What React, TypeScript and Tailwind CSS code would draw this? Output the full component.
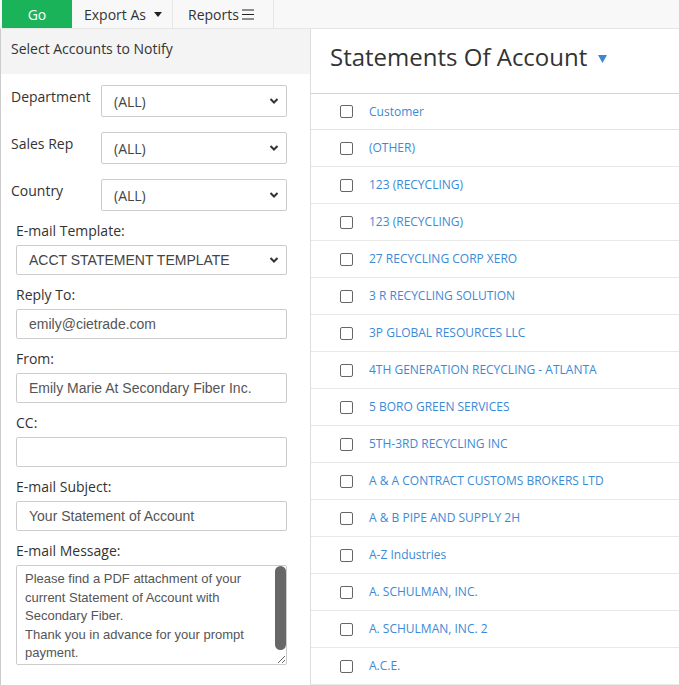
import React from 'react';

const customers = [
  '(OTHER)',
  '123 (RECYCLING)',
  '123 (RECYCLING)',
  '27 RECYCLING CORP XERO',
  '3 R RECYCLING SOLUTION',
  '3P GLOBAL RESOURCES LLC',
  '4TH GENERATION RECYCLING - ATLANTA',
  '5 BORO GREEN SERVICES',
  '5TH-3RD RECYCLING INC',
  'A & A CONTRACT CUSTOMS BROKERS LTD',
  'A & B PIPE AND SUPPLY 2H',
  'A-Z Industries',
  'A. SCHULMAN, INC.',
  'A. SCHULMAN, INC. 2',
  'A.C.E.',
];

const Chevron = () => (
  <svg className="pointer-events-none absolute right-[8px] top-1/2 -translate-y-1/2" width="10" height="7" viewBox="0 0 10 7">
    <path d="M1.5 1.5 L5 5 L8.5 1.5" fill="none" stroke="#333" strokeWidth="2" />
  </svg>
);

const FilterRow = ({ label }: { label: string }) => (
  <div className="flex items-start pl-[10px] pr-[23px]">
    <div className="w-[90px] pt-[2px] text-[14px] leading-[20px] text-[#333]">{label}</div>
    <div className="relative flex-1">
      <select className="h-[32px] w-full appearance-none rounded-[2px] border border-[#ccc] bg-white pl-[12px] text-[14px] text-[#444] outline-none">
        <option>(ALL)</option>
      </select>
      <Chevron />
    </div>
  </div>
);

const Field = ({ label, value }: { label: string; value: string }) => (
  <div className="mb-[10px]">
    <div className="mb-[4px] text-[14px] leading-[20px] text-[#333]">{label}</div>
    <input
      readOnly
      value={value}
      className="h-[30px] w-full rounded-[2px] border border-[#ccc] bg-white pl-[12px] text-[14px] text-[#555] outline-none font-['Liberation_Sans',Arial,sans-serif]"
    />
  </div>
);

const Box = () => <span className="inline-block h-[13px] w-[13px] shrink-0 rounded-[2px] border border-[#666] bg-white" />;

export default function App() {
  return (
    <div className="h-[685px] w-[679px] overflow-hidden bg-white font-['Open_Sans',sans-serif] text-[#333]">
      <div className="flex h-[29px] border-b border-[#e6e6e6] bg-[#f8f8f8]">
        <div className="ml-[2px] flex w-[70px] items-center justify-center bg-[#1bb35a] text-[14px] text-white">Go</div>
        <div className="flex w-[101px] items-center gap-[8px] border-r border-[#e6e6e6] pl-[12px] text-[14px] text-[#333]">
          Export As
          <svg width="8" height="5" viewBox="0 0 8 5"><path d="M0 0 H8 L4 5 Z" fill="#222" /></svg>
        </div>
        <div className="flex w-[101px] items-center border-r border-[#e6e6e6] pl-[15px] text-[14px] text-[#333]">
          Reports
          <svg className="ml-[3px]" width="12" height="11" viewBox="0 0 12 11">
            <path d="M0 1 H12 M0 5.5 H12 M0 10 H12" stroke="#222" strokeWidth="1.2" />
          </svg>
        </div>
      </div>

      <div className="flex">
        <div className="w-[310px] shrink-0 border-l border-[#ccc]">
          <div className="h-[45px] bg-[#f4f4f4] pl-[10px] pt-[10px] text-[14px] leading-[20px]">Select Accounts to Notify</div>
          <div className="mt-[11px] flex flex-col gap-[15px]">
            <FilterRow label="Department" />
            <FilterRow label="Sales Rep" />
            <FilterRow label="Country" />
          </div>

          <div className="mt-[10px] pl-[15px] pr-[23px]">
            <div className="mb-[10px]">
              <div className="mb-[4px] text-[14px] leading-[20px]">E-mail Template:</div>
              <div className="relative">
                <select className="h-[30px] w-full appearance-none rounded-[2px] border border-[#ccc] bg-white pl-[12px] text-[14px] text-[#444] outline-none font-['Liberation_Sans',Arial,sans-serif]">
                  <option>ACCT STATEMENT TEMPLATE</option>
                </select>
                <Chevron />
              </div>
            </div>
            <Field label="Reply To:" value="emily@cietrade.com" />
            <Field label="From:" value="Emily Marie At Secondary Fiber Inc." />
            <Field label="CC:" value="" />
            <Field label="E-mail Subject:" value="Your Statement of Account" />
            <div>
              <div className="mb-[4px] text-[14px] leading-[20px]">E-mail Message:</div>
              <div className="relative">
                <textarea
                  readOnly
                  className="block h-[100px] w-full resize overflow-hidden rounded-[2px] border border-[#ccc] bg-white pl-[8px] pr-[18px] pt-[4px] text-[13px] leading-[18.6px] text-[#555] outline-none font-['Liberation_Sans',Arial,sans-serif]"
                  value={'Please find a PDF attachment of your current Statement of Account with Secondary Fiber.\nThank you in advance for your prompt payment.\n\nRegards,\nEmily Marie'}
                />
                <div className="pointer-events-none absolute right-[1px] top-[1px] h-[84px] w-[11px] rounded-full bg-[#676767]" />
              </div>
            </div>
          </div>
        </div>

        <div className="flex-1 border-l border-[#ddd]">
          <div className="flex h-[65px] items-center border-b border-[#d4d4d4] pb-[9px] pl-[19px]">
            <span className="text-[24px] text-[#333]">Statements Of Account</span>
            <svg className="ml-[11px] mt-[4px]" width="9" height="8" viewBox="0 0 9 8"><path d="M0 0 H9 L4.5 8 Z" fill="#3a87d5" /></svg>
          </div>
          <div className="flex h-[36px] items-center gap-[16px] border-b border-[#e3e3e3] pl-[29px] text-[12px] text-[#3b8ad6]">
            <Box />
            Customer
          </div>
          {customers.map((c, i) => (
            <div key={i} className="flex h-[37px] items-center gap-[16px] border-b border-[#e8e8e8] pl-[29px] text-[12px] text-[#3b8ad6]">
              <Box />
              {c}
            </div>
          ))}
        </div>
      </div>
    </div>
  );
}
